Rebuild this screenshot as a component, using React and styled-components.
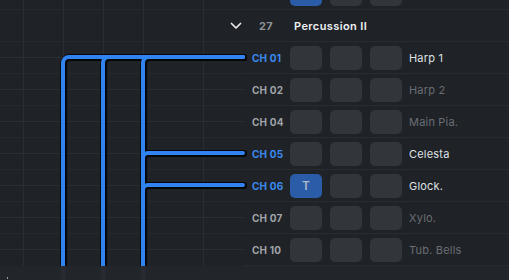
import React from "react";
import styled, { createGlobalStyle } from "styled-components";

const Global = createGlobalStyle`
  html, body { margin: 0; padding: 0; background: #1f2227; }
  body { font-family: Inter, "Noto Sans", sans-serif; -webkit-font-smoothing: antialiased; }
  * { box-sizing: border-box; }
`;

const Screen = styled.div`
  width: 509px;
  height: 280px;
  overflow: hidden;
  display: flex;
  flex-direction: column;
  background: #1f2227;
`;

const Workspace = styled.div`
  display: grid;
  grid-template-columns: 244px 1fr;
  height: 266px;
  flex: none;
`;

const Canvas = styled.div`
  position: relative;
  height: 266px;
  overflow: visible;
`;

const RoutingSvg = styled.svg`
  display: block;
  overflow: visible;
`;

const ChannelList = styled.div`
  display: flex;
  flex-direction: column;
  margin-top: -22px;
`;

const RowBase = styled.div`
  display: flex;
  align-items: center;
  height: 32px;
  flex: none;
  border-bottom: 1px solid #282b30;
`;

const ChannelRowWrap = styled(RowBase)`
  padding-left: 8px;
`;

const GroupHeader = styled(RowBase)`
  padding-left: 0;
`;

const Chevron = styled.svg`
  margin-left: -14px;
  width: 12px;
  height: 8px;
  flex: none;
`;

const GroupNumber = styled.span`
  margin-left: 17px;
  width: 35px;
  font-size: 11px;
  font-weight: 700;
  color: #8f9398;
  letter-spacing: 0.2px;
`;

const GroupTitle = styled.span`
  font-size: 11px;
  font-weight: 600;
  color: #eef0f2;
  letter-spacing: 0.4px;
`;

const ChannelLabel = styled.span`
  width: 38px;
  flex: none;
  font-size: 10px;
  font-weight: 700;
  letter-spacing: 0.2px;
  color: ${(p) => (p.$routed ? "#3a8bf0" : "#9fa2a7")};
`;

const Pads = styled.div`
  display: flex;
  gap: 8px;
  flex: none;
`;

const Pad = styled.div`
  width: 32px;
  height: 24px;
  border-radius: 5px;
  background: ${(p) => (p.$on ? "#2b5ca7" : "#323539")};
  display: flex;
  align-items: center;
  justify-content: center;
  font-size: 12px;
  font-weight: 600;
  color: #aeb8c9;
`;

const ChannelName = styled.span`
  margin-left: 7px;
  font-size: 11px;
  font-weight: 400;
  letter-spacing: 0.2px;
  white-space: nowrap;
  color: ${(p) => (p.$routed ? "#dfe1e4" : "#6a6e74")};
`;

const StatusBar = styled.div`
  flex: 1;
  background: #22252a;
  position: relative;
  display: flex;
  align-items: flex-start;
`;

const Tick = styled.span`
  margin-left: 7px;
  margin-top: 11px;
  width: 1px;
  height: 2px;
  background: #9a9ea4;
  flex: none;
`;

const Strips = styled.div`
  display: flex;
  gap: 35px;
  margin-left: 53px;
  height: 100%;
`;

const Strip = styled.span`
  width: 5px;
  height: 100%;
  background: #272b31;
`;

const channels = [
  { ch: "CH 01", name: "Harp 1", routed: true },
  { ch: "CH 02", name: "Harp 2", routed: false },
  { ch: "CH 04", name: "Main Pia.", routed: false },
  { ch: "CH 05", name: "Celesta", routed: true },
  { ch: "CH 06", name: "Glock.", routed: true, pad: "T" },
  { ch: "CH 07", name: "Xylo.", routed: false },
  { ch: "CH 10", name: "Tub. Bells", routed: false },
];

function ChannelRow({ ch, name, routed, pad }) {
  return (
    <ChannelRowWrap>
      <ChannelLabel $routed={routed}>{ch}</ChannelLabel>
      <Pads>
        <Pad $on={!!pad}>{pad}</Pad>
        <Pad />
        <Pad />
      </Pads>
      <ChannelName $routed={routed}>{name}</ChannelName>
    </ChannelRowWrap>
  );
}

function Routing() {
  const vx = [23, 63, 103, 143, 203];
  const centers = [57, 89, 121, 153, 185, 217, 249];
  const borders = [9, 41, 73, 105, 137, 169, 201, 233];
  const wires = [
    "M63 270 V63 A6 6 0 0 1 69 57 H243",
    "M103 270 V63 A6 6 0 0 1 109 57 H243",
    "M143 270 V63 A6 6 0 0 1 149 57 H243",
    "M143 158 A5 5 0 0 1 148 153 H243",
    "M143 190 A5 5 0 0 1 148 185 H243",
  ];
  return (
    <RoutingSvg width="244" height="266" viewBox="0 0 244 266">
      {borders.map((y) => (
        <rect key={"b" + y} x="0" y={y} width="244" height="1" fill="#25282d" />
      ))}
      {centers.map((y) => (
        <rect key={"c" + y} x="0" y={y} width="243" height="1" fill="#2b2e33" />
      ))}
      {vx.map((x) => (
        <rect key={"v" + x} x={x} y="0" width="1" height="266" fill="#2a2d32" />
      ))}
      <g fill="none" strokeLinecap="round" strokeLinejoin="round">
        {wires.map((d, i) => (
          <path key={"o" + i} d={d} stroke="#050607" strokeWidth="7" transform="translate(0.6 0.6)" />
        ))}
        {wires.map((d, i) => (
          <path key={"w" + i} d={d} stroke="#3283f2" strokeWidth="4" />
        ))}
      </g>
    </RoutingSvg>
  );
}

export default function App() {
  return (
    <>
      <Global />
      <Screen>
        <Workspace>
          <Canvas>
            <Routing />
          </Canvas>
          <ChannelList>
            <ChannelRowWrap>
              <ChannelLabel />
              <Pads>
                <Pad $on />
                <Pad />
                <Pad />
              </Pads>
            </ChannelRowWrap>
            <GroupHeader>
              <Chevron viewBox="0 0 12 8">
                <path d="M1.5 1.5 L6 6 L10.5 1.5" fill="none" stroke="#e8e9eb" strokeWidth="1.7" strokeLinecap="round" strokeLinejoin="round" />
              </Chevron>
              <GroupNumber>27</GroupNumber>
              <GroupTitle>Percussion II</GroupTitle>
            </GroupHeader>
            {channels.map((c) => (
              <ChannelRow key={c.ch} {...c} />
            ))}
          </ChannelList>
        </Workspace>
        <StatusBar>
          <Tick />
          <Strips>
            <Strip />
            <Strip />
            <Strip />
          </Strips>
        </StatusBar>
      </Screen>
    </>
  );
}
